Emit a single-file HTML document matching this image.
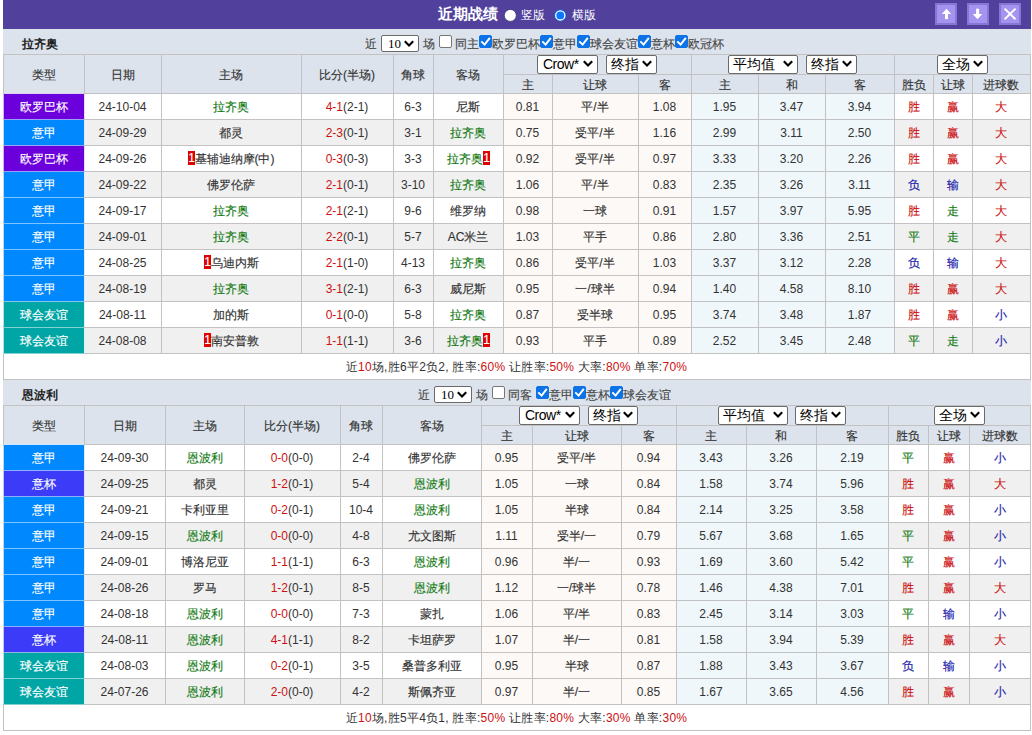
<!DOCTYPE html><html><head><meta charset="utf-8"><style>
html,body{margin:0;padding:0;background:#fff;}
body{width:1032px;height:735px;position:relative;overflow:hidden;font-family:'Liberation Sans', sans-serif;font-size:12px;color:#333333;}
body>div{position:absolute;box-sizing:border-box;white-space:nowrap;}
.rc{font-style:normal;background:#e00000;color:#fff;display:inline-block;width:7px;height:14px;line-height:14px;font-size:12px;text-align:center;overflow:hidden;vertical-align:-2px;letter-spacing:-1px}
.cj{position:relative;top:1px;-webkit-text-stroke:0.15px}
.lbl{font-weight:bold;font-size:12px;line-height:14px;color:#222}
.ft{line-height:14px;color:#444;-webkit-text-stroke:0.12px}
.ttl{font-size:15px;font-weight:bold;color:#fff;line-height:18px}
.rt{font-size:12px;color:#fff;line-height:14px}
.radio{width:13px;height:13px;border-radius:50%;background:#fff;box-sizing:border-box;border:1px solid #ccc}
.radio.on{border:2px solid #fff;background:#1a6ff0;box-shadow:inset 0 0 0 1.5px #fff}
.btn{width:22px;height:22px;background:#a493ef;border:2px solid #8776d6;box-sizing:border-box}
.sel{background:#fff;border:1px solid #6a6a6a;border-radius:2px;color:#000;}
.sel span{position:absolute;left:5px;top:0px;line-height:16px}
.sel2{background:#fff;border:1px solid #6a6a6a;border-radius:2px;color:#000;}
.sel2 span{position:absolute;left:6px;top:0;line-height:15px;font-family:'Liberation Serif',serif;font-size:13px;}
.chev{position:absolute;top:4px}
.cb{width:13px;height:13px;border:1px solid #767676;border-radius:2px;background:#fff;box-sizing:border-box}
.cb.on{background:#0b72e7;border-color:#0b72e7}
.cb svg{position:absolute;left:-1px;top:-1px}
</style></head><body>
<div style="left:3px;top:0;width:1028px;height:29px;background:#51419d"></div>
<div class="ttl" style="left:438px;top:5px">近期战绩</div>
<svg style="position:absolute;left:503px;top:8px" width="15" height="15" viewBox="0 0 15 15"><circle cx="7.3" cy="7.4" r="6" fill="#fff" stroke="#3a3070" stroke-width="0.8"/></svg>
<div class="rt" style="left:521px;top:8px">竖版</div>
<svg style="position:absolute;left:553px;top:8px" width="15" height="15" viewBox="0 0 15 15"><circle cx="7.3" cy="7.4" r="6.2" fill="#1f5fd8"/><circle cx="7.3" cy="7.4" r="4.6" fill="#0a78ff" stroke="#fff" stroke-width="1.3"/></svg>
<div class="rt" style="left:572px;top:8px">横版</div>
<div class="btn" style="left:935px;top:3px"><svg width="22" height="22" viewBox="0 0 22 22" style="position:absolute;left:-2px;top:-2px"><path d="M6.8 11 L11.5 5.8 L16.2 11 Z" fill="#fff"/><rect x="10" y="10.5" width="3" height="5.6" fill="#fff"/></svg></div>
<div class="btn" style="left:967px;top:3px"><svg width="22" height="22" viewBox="0 0 22 22" style="position:absolute;left:-2px;top:-2px"><path d="M5.7 11 L10.5 16.2 L15.3 11 Z" fill="#fff"/><rect x="9.1" y="5.7" width="3" height="5.8" fill="#fff"/></svg></div>
<div class="btn" style="left:999px;top:3px"><svg width="22" height="22" viewBox="0 0 22 22" style="position:absolute;left:-2px;top:-2px"><path d="M5.6 5.6 L16.5 16.3 M16.5 5.6 L5.6 16.3" stroke="#fff" stroke-width="2"/></svg></div>
<div style="left:3px;top:29px;width:1028px;height:25px;background:#dce3ec"></div>
<div class="lbl" style="left:22px;top:37px">拉齐奥</div>
<div class="ft" style="left:365px;top:37px">近</div><div class="sel2" style="left:381px;top:35px;width:38px;height:17px"><span>10</span><svg class="chev" style="right:4px;top:4px" width="10" height="7" viewBox="0 0 10 7"><path d="M0.8 1.2 L5 5.4 L9.2 1.2" fill="none" stroke="#000" stroke-width="2.1"/></svg></div><div class="ft" style="left:423px;top:37px">场</div><div class="cb" style="left:439px;top:35px"></div><div class="ft" style="left:455px;top:37px">同主</div><div class="cb on" style="left:479px;top:35px"><svg width="13" height="13" viewBox="0 0 13 13"><path d="M2.3 6.4 L5.6 9.6 L10.8 2.9" fill="none" stroke="#fff" stroke-width="2"/></svg></div><div class="ft" style="left:492px;top:37px">欧罗巴杯</div><div class="cb on" style="left:540px;top:35px"><svg width="13" height="13" viewBox="0 0 13 13"><path d="M2.3 6.4 L5.6 9.6 L10.8 2.9" fill="none" stroke="#fff" stroke-width="2"/></svg></div><div class="ft" style="left:553px;top:37px">意甲</div><div class="cb on" style="left:577px;top:35px"><svg width="13" height="13" viewBox="0 0 13 13"><path d="M2.3 6.4 L5.6 9.6 L10.8 2.9" fill="none" stroke="#fff" stroke-width="2"/></svg></div><div class="ft" style="left:590px;top:37px">球会友谊</div><div class="cb on" style="left:638px;top:35px"><svg width="13" height="13" viewBox="0 0 13 13"><path d="M2.3 6.4 L5.6 9.6 L10.8 2.9" fill="none" stroke="#fff" stroke-width="2"/></svg></div><div class="ft" style="left:651px;top:37px">意杯</div><div class="cb on" style="left:675px;top:35px"><svg width="13" height="13" viewBox="0 0 13 13"><path d="M2.3 6.4 L5.6 9.6 L10.8 2.9" fill="none" stroke="#fff" stroke-width="2"/></svg></div><div class="ft" style="left:688px;top:37px">欧冠杯</div>
<div style="left:3px;top:54px;width:1028px;height:39px;background:#dce3ec"></div>
<div style="left:4px;top:55px;width:80px;height:38px;display:flex;align-items:center;justify-content:center;padding-right:1px"><span class="cj">类型</span></div>
<div style="left:85px;top:55px;width:76px;height:38px;display:flex;align-items:center;justify-content:center;padding-right:1px"><span class="cj">日期</span></div>
<div style="left:162px;top:55px;width:139px;height:38px;display:flex;align-items:center;justify-content:center;padding-right:1px"><span class="cj">主场</span></div>
<div style="left:302px;top:55px;width:91px;height:38px;display:flex;align-items:center;justify-content:center;padding-right:1px"><span class="cj">比分(半场)</span></div>
<div style="left:394px;top:55px;width:39px;height:38px;display:flex;align-items:center;justify-content:center;padding-right:1px"><span class="cj">角球</span></div>
<div style="left:434px;top:55px;width:69px;height:38px;display:flex;align-items:center;justify-content:center;padding-right:1px"><span class="cj">客场</span></div>
<div style="left:504px;top:75px;width:48px;height:18px;display:flex;align-items:center;justify-content:center;padding-right:1px"><span class="cj">主</span></div>
<div style="left:553px;top:75px;width:85px;height:18px;display:flex;align-items:center;justify-content:center;padding-right:1px"><span class="cj">让球</span></div>
<div style="left:639px;top:75px;width:52px;height:18px;display:flex;align-items:center;justify-content:center;padding-right:1px"><span class="cj">客</span></div>
<div style="left:692px;top:75px;width:66px;height:18px;display:flex;align-items:center;justify-content:center;padding-right:1px"><span class="cj">主</span></div>
<div style="left:759px;top:75px;width:66px;height:18px;display:flex;align-items:center;justify-content:center;padding-right:1px"><span class="cj">和</span></div>
<div style="left:826px;top:75px;width:68px;height:18px;display:flex;align-items:center;justify-content:center;padding-right:1px"><span class="cj">客</span></div>
<div style="left:895px;top:75px;width:38px;height:18px;display:flex;align-items:center;justify-content:center;padding-right:1px"><span class="cj">胜负</span></div>
<div style="left:934px;top:75px;width:38px;height:18px;display:flex;align-items:center;justify-content:center;padding-right:1px"><span class="cj">让球</span></div>
<div style="left:973px;top:75px;width:57px;height:18px;display:flex;align-items:center;justify-content:center;padding-right:1px"><span class="cj">进球数</span></div>
<div style="left:4px;top:94px;width:80px;height:25px;background:#6b00dc;color:#fff;display:flex;align-items:center;justify-content:center;padding-right:1px"><span class="cj">欧罗巴杯</span></div>
<div style="left:85px;top:94px;width:76px;height:25px;background:#fff;display:flex;align-items:center;justify-content:center;padding-right:1px"><span>24-10-04</span></div>
<div style="left:162px;top:94px;width:139px;height:25px;background:#fff;display:flex;align-items:center;justify-content:center;padding-right:1px"><span class="cj"><span style="color:#127a12">拉齐奥</span></span></div>
<div style="left:302px;top:94px;width:91px;height:25px;background:#fff;display:flex;align-items:center;justify-content:center;padding-right:1px"><span><span style="color:#cc1111">4-1</span>(2-1)</span></div>
<div style="left:394px;top:94px;width:39px;height:25px;background:#fff;display:flex;align-items:center;justify-content:center;padding-right:1px"><span>6-3</span></div>
<div style="left:434px;top:94px;width:69px;height:25px;background:#fff;display:flex;align-items:center;justify-content:center;padding-right:1px"><span class="cj"><span>尼斯</span></span></div>
<div style="left:504px;top:94px;width:48px;height:25px;background:#fdf9f6;display:flex;align-items:center;justify-content:center;padding-right:1px"><span>0.81</span></div>
<div style="left:553px;top:94px;width:85px;height:25px;background:#fdf9f6;display:flex;align-items:center;justify-content:center;padding-right:1px"><span class="cj">平/半</span></div>
<div style="left:639px;top:94px;width:52px;height:25px;background:#fdf9f6;display:flex;align-items:center;justify-content:center;padding-right:1px"><span>1.08</span></div>
<div style="left:692px;top:94px;width:66px;height:25px;background:#eff7fa;display:flex;align-items:center;justify-content:center;padding-right:1px"><span>1.95</span></div>
<div style="left:759px;top:94px;width:66px;height:25px;background:#eff7fa;display:flex;align-items:center;justify-content:center;padding-right:1px"><span>3.47</span></div>
<div style="left:826px;top:94px;width:68px;height:25px;background:#eff7fa;display:flex;align-items:center;justify-content:center;padding-right:1px"><span>3.94</span></div>
<div style="left:895px;top:94px;width:38px;height:25px;background:#fff;display:flex;align-items:center;justify-content:center;padding-right:1px"><span class="cj"><span style="color:#cc1111">胜</span></span></div>
<div style="left:934px;top:94px;width:38px;height:25px;background:#fff;display:flex;align-items:center;justify-content:center;padding-right:1px"><span class="cj"><span style="color:#cc1111">赢</span></span></div>
<div style="left:973px;top:94px;width:57px;height:25px;background:#fff;display:flex;align-items:center;justify-content:center;padding-right:1px"><span class="cj"><span style="color:#cc1111">大</span></span></div>
<div style="left:4px;top:120px;width:80px;height:25px;background:#0088ff;color:#fff;display:flex;align-items:center;justify-content:center;padding-right:1px"><span class="cj">意甲</span></div>
<div style="left:85px;top:120px;width:76px;height:25px;background:#f0f0f0;display:flex;align-items:center;justify-content:center;padding-right:1px"><span>24-09-29</span></div>
<div style="left:162px;top:120px;width:139px;height:25px;background:#f0f0f0;display:flex;align-items:center;justify-content:center;padding-right:1px"><span class="cj"><span>都灵</span></span></div>
<div style="left:302px;top:120px;width:91px;height:25px;background:#f0f0f0;display:flex;align-items:center;justify-content:center;padding-right:1px"><span><span style="color:#cc1111">2-3</span>(0-1)</span></div>
<div style="left:394px;top:120px;width:39px;height:25px;background:#f0f0f0;display:flex;align-items:center;justify-content:center;padding-right:1px"><span>3-1</span></div>
<div style="left:434px;top:120px;width:69px;height:25px;background:#f0f0f0;display:flex;align-items:center;justify-content:center;padding-right:1px"><span class="cj"><span style="color:#127a12">拉齐奥</span></span></div>
<div style="left:504px;top:120px;width:48px;height:25px;background:#fdf9f6;display:flex;align-items:center;justify-content:center;padding-right:1px"><span>0.75</span></div>
<div style="left:553px;top:120px;width:85px;height:25px;background:#fdf9f6;display:flex;align-items:center;justify-content:center;padding-right:1px"><span class="cj">受平/半</span></div>
<div style="left:639px;top:120px;width:52px;height:25px;background:#fdf9f6;display:flex;align-items:center;justify-content:center;padding-right:1px"><span>1.16</span></div>
<div style="left:692px;top:120px;width:66px;height:25px;background:#eff7fa;display:flex;align-items:center;justify-content:center;padding-right:1px"><span>2.99</span></div>
<div style="left:759px;top:120px;width:66px;height:25px;background:#eff7fa;display:flex;align-items:center;justify-content:center;padding-right:1px"><span>3.11</span></div>
<div style="left:826px;top:120px;width:68px;height:25px;background:#eff7fa;display:flex;align-items:center;justify-content:center;padding-right:1px"><span>2.50</span></div>
<div style="left:895px;top:120px;width:38px;height:25px;background:#f0f0f0;display:flex;align-items:center;justify-content:center;padding-right:1px"><span class="cj"><span style="color:#cc1111">胜</span></span></div>
<div style="left:934px;top:120px;width:38px;height:25px;background:#f0f0f0;display:flex;align-items:center;justify-content:center;padding-right:1px"><span class="cj"><span style="color:#cc1111">赢</span></span></div>
<div style="left:973px;top:120px;width:57px;height:25px;background:#f0f0f0;display:flex;align-items:center;justify-content:center;padding-right:1px"><span class="cj"><span style="color:#cc1111">大</span></span></div>
<div style="left:4px;top:146px;width:80px;height:25px;background:#6b00dc;color:#fff;display:flex;align-items:center;justify-content:center;padding-right:1px"><span class="cj">欧罗巴杯</span></div>
<div style="left:85px;top:146px;width:76px;height:25px;background:#fff;display:flex;align-items:center;justify-content:center;padding-right:1px"><span>24-09-26</span></div>
<div style="left:162px;top:146px;width:139px;height:25px;background:#fff;display:flex;align-items:center;justify-content:center;padding-right:1px"><span class="cj"><span><i class="rc">1</i>基辅迪纳摩(中)</span></span></div>
<div style="left:302px;top:146px;width:91px;height:25px;background:#fff;display:flex;align-items:center;justify-content:center;padding-right:1px"><span><span style="color:#cc1111">0-3</span>(0-3)</span></div>
<div style="left:394px;top:146px;width:39px;height:25px;background:#fff;display:flex;align-items:center;justify-content:center;padding-right:1px"><span>3-3</span></div>
<div style="left:434px;top:146px;width:69px;height:25px;background:#fff;display:flex;align-items:center;justify-content:center;padding-right:1px"><span class="cj"><span style="color:#127a12">拉齐奥<i class="rc">1</i></span></span></div>
<div style="left:504px;top:146px;width:48px;height:25px;background:#fdf9f6;display:flex;align-items:center;justify-content:center;padding-right:1px"><span>0.92</span></div>
<div style="left:553px;top:146px;width:85px;height:25px;background:#fdf9f6;display:flex;align-items:center;justify-content:center;padding-right:1px"><span class="cj">受平/半</span></div>
<div style="left:639px;top:146px;width:52px;height:25px;background:#fdf9f6;display:flex;align-items:center;justify-content:center;padding-right:1px"><span>0.97</span></div>
<div style="left:692px;top:146px;width:66px;height:25px;background:#eff7fa;display:flex;align-items:center;justify-content:center;padding-right:1px"><span>3.33</span></div>
<div style="left:759px;top:146px;width:66px;height:25px;background:#eff7fa;display:flex;align-items:center;justify-content:center;padding-right:1px"><span>3.20</span></div>
<div style="left:826px;top:146px;width:68px;height:25px;background:#eff7fa;display:flex;align-items:center;justify-content:center;padding-right:1px"><span>2.26</span></div>
<div style="left:895px;top:146px;width:38px;height:25px;background:#fff;display:flex;align-items:center;justify-content:center;padding-right:1px"><span class="cj"><span style="color:#cc1111">胜</span></span></div>
<div style="left:934px;top:146px;width:38px;height:25px;background:#fff;display:flex;align-items:center;justify-content:center;padding-right:1px"><span class="cj"><span style="color:#cc1111">赢</span></span></div>
<div style="left:973px;top:146px;width:57px;height:25px;background:#fff;display:flex;align-items:center;justify-content:center;padding-right:1px"><span class="cj"><span style="color:#cc1111">大</span></span></div>
<div style="left:4px;top:172px;width:80px;height:25px;background:#0088ff;color:#fff;display:flex;align-items:center;justify-content:center;padding-right:1px"><span class="cj">意甲</span></div>
<div style="left:85px;top:172px;width:76px;height:25px;background:#f0f0f0;display:flex;align-items:center;justify-content:center;padding-right:1px"><span>24-09-22</span></div>
<div style="left:162px;top:172px;width:139px;height:25px;background:#f0f0f0;display:flex;align-items:center;justify-content:center;padding-right:1px"><span class="cj"><span>佛罗伦萨</span></span></div>
<div style="left:302px;top:172px;width:91px;height:25px;background:#f0f0f0;display:flex;align-items:center;justify-content:center;padding-right:1px"><span><span style="color:#cc1111">2-1</span>(0-1)</span></div>
<div style="left:394px;top:172px;width:39px;height:25px;background:#f0f0f0;display:flex;align-items:center;justify-content:center;padding-right:1px"><span>3-10</span></div>
<div style="left:434px;top:172px;width:69px;height:25px;background:#f0f0f0;display:flex;align-items:center;justify-content:center;padding-right:1px"><span class="cj"><span style="color:#127a12">拉齐奥</span></span></div>
<div style="left:504px;top:172px;width:48px;height:25px;background:#fdf9f6;display:flex;align-items:center;justify-content:center;padding-right:1px"><span>1.06</span></div>
<div style="left:553px;top:172px;width:85px;height:25px;background:#fdf9f6;display:flex;align-items:center;justify-content:center;padding-right:1px"><span class="cj">平/半</span></div>
<div style="left:639px;top:172px;width:52px;height:25px;background:#fdf9f6;display:flex;align-items:center;justify-content:center;padding-right:1px"><span>0.83</span></div>
<div style="left:692px;top:172px;width:66px;height:25px;background:#eff7fa;display:flex;align-items:center;justify-content:center;padding-right:1px"><span>2.35</span></div>
<div style="left:759px;top:172px;width:66px;height:25px;background:#eff7fa;display:flex;align-items:center;justify-content:center;padding-right:1px"><span>3.26</span></div>
<div style="left:826px;top:172px;width:68px;height:25px;background:#eff7fa;display:flex;align-items:center;justify-content:center;padding-right:1px"><span>3.11</span></div>
<div style="left:895px;top:172px;width:38px;height:25px;background:#f0f0f0;display:flex;align-items:center;justify-content:center;padding-right:1px"><span class="cj"><span style="color:#1a1aaa">负</span></span></div>
<div style="left:934px;top:172px;width:38px;height:25px;background:#f0f0f0;display:flex;align-items:center;justify-content:center;padding-right:1px"><span class="cj"><span style="color:#1a1aaa">输</span></span></div>
<div style="left:973px;top:172px;width:57px;height:25px;background:#f0f0f0;display:flex;align-items:center;justify-content:center;padding-right:1px"><span class="cj"><span style="color:#cc1111">大</span></span></div>
<div style="left:4px;top:198px;width:80px;height:25px;background:#0088ff;color:#fff;display:flex;align-items:center;justify-content:center;padding-right:1px"><span class="cj">意甲</span></div>
<div style="left:85px;top:198px;width:76px;height:25px;background:#fff;display:flex;align-items:center;justify-content:center;padding-right:1px"><span>24-09-17</span></div>
<div style="left:162px;top:198px;width:139px;height:25px;background:#fff;display:flex;align-items:center;justify-content:center;padding-right:1px"><span class="cj"><span style="color:#127a12">拉齐奥</span></span></div>
<div style="left:302px;top:198px;width:91px;height:25px;background:#fff;display:flex;align-items:center;justify-content:center;padding-right:1px"><span><span style="color:#cc1111">2-1</span>(2-1)</span></div>
<div style="left:394px;top:198px;width:39px;height:25px;background:#fff;display:flex;align-items:center;justify-content:center;padding-right:1px"><span>9-6</span></div>
<div style="left:434px;top:198px;width:69px;height:25px;background:#fff;display:flex;align-items:center;justify-content:center;padding-right:1px"><span class="cj"><span>维罗纳</span></span></div>
<div style="left:504px;top:198px;width:48px;height:25px;background:#fdf9f6;display:flex;align-items:center;justify-content:center;padding-right:1px"><span>0.98</span></div>
<div style="left:553px;top:198px;width:85px;height:25px;background:#fdf9f6;display:flex;align-items:center;justify-content:center;padding-right:1px"><span class="cj">一球</span></div>
<div style="left:639px;top:198px;width:52px;height:25px;background:#fdf9f6;display:flex;align-items:center;justify-content:center;padding-right:1px"><span>0.91</span></div>
<div style="left:692px;top:198px;width:66px;height:25px;background:#eff7fa;display:flex;align-items:center;justify-content:center;padding-right:1px"><span>1.57</span></div>
<div style="left:759px;top:198px;width:66px;height:25px;background:#eff7fa;display:flex;align-items:center;justify-content:center;padding-right:1px"><span>3.97</span></div>
<div style="left:826px;top:198px;width:68px;height:25px;background:#eff7fa;display:flex;align-items:center;justify-content:center;padding-right:1px"><span>5.95</span></div>
<div style="left:895px;top:198px;width:38px;height:25px;background:#fff;display:flex;align-items:center;justify-content:center;padding-right:1px"><span class="cj"><span style="color:#cc1111">胜</span></span></div>
<div style="left:934px;top:198px;width:38px;height:25px;background:#fff;display:flex;align-items:center;justify-content:center;padding-right:1px"><span class="cj"><span style="color:#127a12">走</span></span></div>
<div style="left:973px;top:198px;width:57px;height:25px;background:#fff;display:flex;align-items:center;justify-content:center;padding-right:1px"><span class="cj"><span style="color:#cc1111">大</span></span></div>
<div style="left:4px;top:224px;width:80px;height:25px;background:#0088ff;color:#fff;display:flex;align-items:center;justify-content:center;padding-right:1px"><span class="cj">意甲</span></div>
<div style="left:85px;top:224px;width:76px;height:25px;background:#f0f0f0;display:flex;align-items:center;justify-content:center;padding-right:1px"><span>24-09-01</span></div>
<div style="left:162px;top:224px;width:139px;height:25px;background:#f0f0f0;display:flex;align-items:center;justify-content:center;padding-right:1px"><span class="cj"><span style="color:#127a12">拉齐奥</span></span></div>
<div style="left:302px;top:224px;width:91px;height:25px;background:#f0f0f0;display:flex;align-items:center;justify-content:center;padding-right:1px"><span><span style="color:#cc1111">2-2</span>(0-1)</span></div>
<div style="left:394px;top:224px;width:39px;height:25px;background:#f0f0f0;display:flex;align-items:center;justify-content:center;padding-right:1px"><span>5-7</span></div>
<div style="left:434px;top:224px;width:69px;height:25px;background:#f0f0f0;display:flex;align-items:center;justify-content:center;padding-right:1px"><span class="cj"><span>AC米兰</span></span></div>
<div style="left:504px;top:224px;width:48px;height:25px;background:#fdf9f6;display:flex;align-items:center;justify-content:center;padding-right:1px"><span>1.03</span></div>
<div style="left:553px;top:224px;width:85px;height:25px;background:#fdf9f6;display:flex;align-items:center;justify-content:center;padding-right:1px"><span class="cj">平手</span></div>
<div style="left:639px;top:224px;width:52px;height:25px;background:#fdf9f6;display:flex;align-items:center;justify-content:center;padding-right:1px"><span>0.86</span></div>
<div style="left:692px;top:224px;width:66px;height:25px;background:#eff7fa;display:flex;align-items:center;justify-content:center;padding-right:1px"><span>2.80</span></div>
<div style="left:759px;top:224px;width:66px;height:25px;background:#eff7fa;display:flex;align-items:center;justify-content:center;padding-right:1px"><span>3.36</span></div>
<div style="left:826px;top:224px;width:68px;height:25px;background:#eff7fa;display:flex;align-items:center;justify-content:center;padding-right:1px"><span>2.51</span></div>
<div style="left:895px;top:224px;width:38px;height:25px;background:#f0f0f0;display:flex;align-items:center;justify-content:center;padding-right:1px"><span class="cj"><span style="color:#127a12">平</span></span></div>
<div style="left:934px;top:224px;width:38px;height:25px;background:#f0f0f0;display:flex;align-items:center;justify-content:center;padding-right:1px"><span class="cj"><span style="color:#127a12">走</span></span></div>
<div style="left:973px;top:224px;width:57px;height:25px;background:#f0f0f0;display:flex;align-items:center;justify-content:center;padding-right:1px"><span class="cj"><span style="color:#cc1111">大</span></span></div>
<div style="left:4px;top:250px;width:80px;height:25px;background:#0088ff;color:#fff;display:flex;align-items:center;justify-content:center;padding-right:1px"><span class="cj">意甲</span></div>
<div style="left:85px;top:250px;width:76px;height:25px;background:#fff;display:flex;align-items:center;justify-content:center;padding-right:1px"><span>24-08-25</span></div>
<div style="left:162px;top:250px;width:139px;height:25px;background:#fff;display:flex;align-items:center;justify-content:center;padding-right:1px"><span class="cj"><span><i class="rc">1</i>乌迪内斯</span></span></div>
<div style="left:302px;top:250px;width:91px;height:25px;background:#fff;display:flex;align-items:center;justify-content:center;padding-right:1px"><span><span style="color:#cc1111">2-1</span>(1-0)</span></div>
<div style="left:394px;top:250px;width:39px;height:25px;background:#fff;display:flex;align-items:center;justify-content:center;padding-right:1px"><span>4-13</span></div>
<div style="left:434px;top:250px;width:69px;height:25px;background:#fff;display:flex;align-items:center;justify-content:center;padding-right:1px"><span class="cj"><span style="color:#127a12">拉齐奥</span></span></div>
<div style="left:504px;top:250px;width:48px;height:25px;background:#fdf9f6;display:flex;align-items:center;justify-content:center;padding-right:1px"><span>0.86</span></div>
<div style="left:553px;top:250px;width:85px;height:25px;background:#fdf9f6;display:flex;align-items:center;justify-content:center;padding-right:1px"><span class="cj">受平/半</span></div>
<div style="left:639px;top:250px;width:52px;height:25px;background:#fdf9f6;display:flex;align-items:center;justify-content:center;padding-right:1px"><span>1.03</span></div>
<div style="left:692px;top:250px;width:66px;height:25px;background:#eff7fa;display:flex;align-items:center;justify-content:center;padding-right:1px"><span>3.37</span></div>
<div style="left:759px;top:250px;width:66px;height:25px;background:#eff7fa;display:flex;align-items:center;justify-content:center;padding-right:1px"><span>3.12</span></div>
<div style="left:826px;top:250px;width:68px;height:25px;background:#eff7fa;display:flex;align-items:center;justify-content:center;padding-right:1px"><span>2.28</span></div>
<div style="left:895px;top:250px;width:38px;height:25px;background:#fff;display:flex;align-items:center;justify-content:center;padding-right:1px"><span class="cj"><span style="color:#1a1aaa">负</span></span></div>
<div style="left:934px;top:250px;width:38px;height:25px;background:#fff;display:flex;align-items:center;justify-content:center;padding-right:1px"><span class="cj"><span style="color:#1a1aaa">输</span></span></div>
<div style="left:973px;top:250px;width:57px;height:25px;background:#fff;display:flex;align-items:center;justify-content:center;padding-right:1px"><span class="cj"><span style="color:#cc1111">大</span></span></div>
<div style="left:4px;top:276px;width:80px;height:25px;background:#0088ff;color:#fff;display:flex;align-items:center;justify-content:center;padding-right:1px"><span class="cj">意甲</span></div>
<div style="left:85px;top:276px;width:76px;height:25px;background:#f0f0f0;display:flex;align-items:center;justify-content:center;padding-right:1px"><span>24-08-19</span></div>
<div style="left:162px;top:276px;width:139px;height:25px;background:#f0f0f0;display:flex;align-items:center;justify-content:center;padding-right:1px"><span class="cj"><span style="color:#127a12">拉齐奥</span></span></div>
<div style="left:302px;top:276px;width:91px;height:25px;background:#f0f0f0;display:flex;align-items:center;justify-content:center;padding-right:1px"><span><span style="color:#cc1111">3-1</span>(2-1)</span></div>
<div style="left:394px;top:276px;width:39px;height:25px;background:#f0f0f0;display:flex;align-items:center;justify-content:center;padding-right:1px"><span>6-3</span></div>
<div style="left:434px;top:276px;width:69px;height:25px;background:#f0f0f0;display:flex;align-items:center;justify-content:center;padding-right:1px"><span class="cj"><span>威尼斯</span></span></div>
<div style="left:504px;top:276px;width:48px;height:25px;background:#fdf9f6;display:flex;align-items:center;justify-content:center;padding-right:1px"><span>0.95</span></div>
<div style="left:553px;top:276px;width:85px;height:25px;background:#fdf9f6;display:flex;align-items:center;justify-content:center;padding-right:1px"><span class="cj">一/球半</span></div>
<div style="left:639px;top:276px;width:52px;height:25px;background:#fdf9f6;display:flex;align-items:center;justify-content:center;padding-right:1px"><span>0.94</span></div>
<div style="left:692px;top:276px;width:66px;height:25px;background:#eff7fa;display:flex;align-items:center;justify-content:center;padding-right:1px"><span>1.40</span></div>
<div style="left:759px;top:276px;width:66px;height:25px;background:#eff7fa;display:flex;align-items:center;justify-content:center;padding-right:1px"><span>4.58</span></div>
<div style="left:826px;top:276px;width:68px;height:25px;background:#eff7fa;display:flex;align-items:center;justify-content:center;padding-right:1px"><span>8.10</span></div>
<div style="left:895px;top:276px;width:38px;height:25px;background:#f0f0f0;display:flex;align-items:center;justify-content:center;padding-right:1px"><span class="cj"><span style="color:#cc1111">胜</span></span></div>
<div style="left:934px;top:276px;width:38px;height:25px;background:#f0f0f0;display:flex;align-items:center;justify-content:center;padding-right:1px"><span class="cj"><span style="color:#cc1111">赢</span></span></div>
<div style="left:973px;top:276px;width:57px;height:25px;background:#f0f0f0;display:flex;align-items:center;justify-content:center;padding-right:1px"><span class="cj"><span style="color:#cc1111">大</span></span></div>
<div style="left:4px;top:302px;width:80px;height:25px;background:#00a5a5;color:#fff;display:flex;align-items:center;justify-content:center;padding-right:1px"><span class="cj">球会友谊</span></div>
<div style="left:85px;top:302px;width:76px;height:25px;background:#fff;display:flex;align-items:center;justify-content:center;padding-right:1px"><span>24-08-11</span></div>
<div style="left:162px;top:302px;width:139px;height:25px;background:#fff;display:flex;align-items:center;justify-content:center;padding-right:1px"><span class="cj"><span>加的斯</span></span></div>
<div style="left:302px;top:302px;width:91px;height:25px;background:#fff;display:flex;align-items:center;justify-content:center;padding-right:1px"><span><span style="color:#cc1111">0-1</span>(0-0)</span></div>
<div style="left:394px;top:302px;width:39px;height:25px;background:#fff;display:flex;align-items:center;justify-content:center;padding-right:1px"><span>5-8</span></div>
<div style="left:434px;top:302px;width:69px;height:25px;background:#fff;display:flex;align-items:center;justify-content:center;padding-right:1px"><span class="cj"><span style="color:#127a12">拉齐奥</span></span></div>
<div style="left:504px;top:302px;width:48px;height:25px;background:#fdf9f6;display:flex;align-items:center;justify-content:center;padding-right:1px"><span>0.87</span></div>
<div style="left:553px;top:302px;width:85px;height:25px;background:#fdf9f6;display:flex;align-items:center;justify-content:center;padding-right:1px"><span class="cj">受半球</span></div>
<div style="left:639px;top:302px;width:52px;height:25px;background:#fdf9f6;display:flex;align-items:center;justify-content:center;padding-right:1px"><span>0.95</span></div>
<div style="left:692px;top:302px;width:66px;height:25px;background:#eff7fa;display:flex;align-items:center;justify-content:center;padding-right:1px"><span>3.74</span></div>
<div style="left:759px;top:302px;width:66px;height:25px;background:#eff7fa;display:flex;align-items:center;justify-content:center;padding-right:1px"><span>3.48</span></div>
<div style="left:826px;top:302px;width:68px;height:25px;background:#eff7fa;display:flex;align-items:center;justify-content:center;padding-right:1px"><span>1.87</span></div>
<div style="left:895px;top:302px;width:38px;height:25px;background:#fff;display:flex;align-items:center;justify-content:center;padding-right:1px"><span class="cj"><span style="color:#cc1111">胜</span></span></div>
<div style="left:934px;top:302px;width:38px;height:25px;background:#fff;display:flex;align-items:center;justify-content:center;padding-right:1px"><span class="cj"><span style="color:#cc1111">赢</span></span></div>
<div style="left:973px;top:302px;width:57px;height:25px;background:#fff;display:flex;align-items:center;justify-content:center;padding-right:1px"><span class="cj"><span style="color:#1a1aaa">小</span></span></div>
<div style="left:4px;top:328px;width:80px;height:25px;background:#00a5a5;color:#fff;display:flex;align-items:center;justify-content:center;padding-right:1px"><span class="cj">球会友谊</span></div>
<div style="left:85px;top:328px;width:76px;height:25px;background:#f0f0f0;display:flex;align-items:center;justify-content:center;padding-right:1px"><span>24-08-08</span></div>
<div style="left:162px;top:328px;width:139px;height:25px;background:#f0f0f0;display:flex;align-items:center;justify-content:center;padding-right:1px"><span class="cj"><span><i class="rc">1</i>南安普敦</span></span></div>
<div style="left:302px;top:328px;width:91px;height:25px;background:#f0f0f0;display:flex;align-items:center;justify-content:center;padding-right:1px"><span><span style="color:#cc1111">1-1</span>(1-1)</span></div>
<div style="left:394px;top:328px;width:39px;height:25px;background:#f0f0f0;display:flex;align-items:center;justify-content:center;padding-right:1px"><span>3-6</span></div>
<div style="left:434px;top:328px;width:69px;height:25px;background:#f0f0f0;display:flex;align-items:center;justify-content:center;padding-right:1px"><span class="cj"><span style="color:#127a12">拉齐奥<i class="rc">1</i></span></span></div>
<div style="left:504px;top:328px;width:48px;height:25px;background:#fdf9f6;display:flex;align-items:center;justify-content:center;padding-right:1px"><span>0.93</span></div>
<div style="left:553px;top:328px;width:85px;height:25px;background:#fdf9f6;display:flex;align-items:center;justify-content:center;padding-right:1px"><span class="cj">平手</span></div>
<div style="left:639px;top:328px;width:52px;height:25px;background:#fdf9f6;display:flex;align-items:center;justify-content:center;padding-right:1px"><span>0.89</span></div>
<div style="left:692px;top:328px;width:66px;height:25px;background:#eff7fa;display:flex;align-items:center;justify-content:center;padding-right:1px"><span>2.52</span></div>
<div style="left:759px;top:328px;width:66px;height:25px;background:#eff7fa;display:flex;align-items:center;justify-content:center;padding-right:1px"><span>3.45</span></div>
<div style="left:826px;top:328px;width:68px;height:25px;background:#eff7fa;display:flex;align-items:center;justify-content:center;padding-right:1px"><span>2.48</span></div>
<div style="left:895px;top:328px;width:38px;height:25px;background:#f0f0f0;display:flex;align-items:center;justify-content:center;padding-right:1px"><span class="cj"><span style="color:#127a12">平</span></span></div>
<div style="left:934px;top:328px;width:38px;height:25px;background:#f0f0f0;display:flex;align-items:center;justify-content:center;padding-right:1px"><span class="cj"><span style="color:#127a12">走</span></span></div>
<div style="left:973px;top:328px;width:57px;height:25px;background:#f0f0f0;display:flex;align-items:center;justify-content:center;padding-right:1px"><span class="cj"><span style="color:#1a1aaa">小</span></span></div>
<div style="left:4px;top:354px;width:1026px;height:25px;background:#fff;display:flex;align-items:center;justify-content:center;padding-right:1px"><span style="letter-spacing:0.26px;position:relative;top:1px">近<span style="color:#cc1111">10</span>场,胜6平2负2, 胜率:<span style="color:#cc1111">60%</span> 让胜率:<span style="color:#cc1111">50%</span> 大率:<span style="color:#cc1111">80%</span> 单率:<span style="color:#cc1111">70%</span></span></div>
<div style="left:3px;top:54px;width:1028px;height:1px;background:#c2c2c2"></div>
<div style="left:503px;top:74px;width:528px;height:1px;background:#c2c2c2"></div>
<div style="left:3px;top:93px;width:1028px;height:1px;background:#c2c2c2"></div>
<div style="left:3px;top:119px;width:1028px;height:1px;background:#c2c2c2"></div>
<div style="left:3px;top:145px;width:1028px;height:1px;background:#c2c2c2"></div>
<div style="left:3px;top:171px;width:1028px;height:1px;background:#c2c2c2"></div>
<div style="left:3px;top:197px;width:1028px;height:1px;background:#c2c2c2"></div>
<div style="left:3px;top:223px;width:1028px;height:1px;background:#c2c2c2"></div>
<div style="left:3px;top:249px;width:1028px;height:1px;background:#c2c2c2"></div>
<div style="left:3px;top:275px;width:1028px;height:1px;background:#c2c2c2"></div>
<div style="left:3px;top:301px;width:1028px;height:1px;background:#c2c2c2"></div>
<div style="left:3px;top:327px;width:1028px;height:1px;background:#c2c2c2"></div>
<div style="left:3px;top:353px;width:1028px;height:1px;background:#c2c2c2"></div>
<div style="left:3px;top:379px;width:1028px;height:1px;background:#c2c2c2"></div>
<div style="left:3px;top:54px;width:1px;height:326px;background:#c2c2c2"></div>
<div style="left:84px;top:54px;width:1px;height:300px;background:#c2c2c2"></div>
<div style="left:161px;top:54px;width:1px;height:300px;background:#c2c2c2"></div>
<div style="left:301px;top:54px;width:1px;height:300px;background:#c2c2c2"></div>
<div style="left:393px;top:54px;width:1px;height:300px;background:#c2c2c2"></div>
<div style="left:433px;top:54px;width:1px;height:300px;background:#c2c2c2"></div>
<div style="left:503px;top:54px;width:1px;height:300px;background:#c2c2c2"></div>
<div style="left:552px;top:74px;width:1px;height:280px;background:#c2c2c2"></div>
<div style="left:638px;top:74px;width:1px;height:280px;background:#c2c2c2"></div>
<div style="left:691px;top:54px;width:1px;height:300px;background:#c2c2c2"></div>
<div style="left:758px;top:74px;width:1px;height:280px;background:#c2c2c2"></div>
<div style="left:825px;top:74px;width:1px;height:280px;background:#c2c2c2"></div>
<div style="left:894px;top:54px;width:1px;height:300px;background:#c2c2c2"></div>
<div style="left:933px;top:74px;width:1px;height:280px;background:#c2c2c2"></div>
<div style="left:972px;top:74px;width:1px;height:280px;background:#c2c2c2"></div>
<div style="left:1030px;top:54px;width:1px;height:326px;background:#c2c2c2"></div>
<div style="left:4px;top:93px;width:80px;height:1px;background:#e1ccf8"></div>
<div style="left:3px;top:94px;width:1px;height:25px;background:#d3b2f4"></div>
<div style="left:84px;top:94px;width:1px;height:25px;background:#e9d9fa"></div>
<div style="left:4px;top:119px;width:80px;height:1px;background:#9aa2f6"></div>
<div style="left:3px;top:120px;width:1px;height:25px;background:#b2dbff"></div>
<div style="left:84px;top:120px;width:1px;height:25px;background:#d9edff"></div>
<div style="left:4px;top:145px;width:80px;height:1px;background:#9aa2f6"></div>
<div style="left:3px;top:146px;width:1px;height:25px;background:#d3b2f4"></div>
<div style="left:84px;top:146px;width:1px;height:25px;background:#e9d9fa"></div>
<div style="left:4px;top:171px;width:80px;height:1px;background:#9aa2f6"></div>
<div style="left:3px;top:172px;width:1px;height:25px;background:#b2dbff"></div>
<div style="left:84px;top:172px;width:1px;height:25px;background:#d9edff"></div>
<div style="left:4px;top:197px;width:80px;height:1px;background:#80c4ff"></div>
<div style="left:3px;top:198px;width:1px;height:25px;background:#b2dbff"></div>
<div style="left:84px;top:198px;width:1px;height:25px;background:#d9edff"></div>
<div style="left:4px;top:223px;width:80px;height:1px;background:#80c4ff"></div>
<div style="left:3px;top:224px;width:1px;height:25px;background:#b2dbff"></div>
<div style="left:84px;top:224px;width:1px;height:25px;background:#d9edff"></div>
<div style="left:4px;top:249px;width:80px;height:1px;background:#80c4ff"></div>
<div style="left:3px;top:250px;width:1px;height:25px;background:#b2dbff"></div>
<div style="left:84px;top:250px;width:1px;height:25px;background:#d9edff"></div>
<div style="left:4px;top:275px;width:80px;height:1px;background:#80c4ff"></div>
<div style="left:3px;top:276px;width:1px;height:25px;background:#b2dbff"></div>
<div style="left:84px;top:276px;width:1px;height:25px;background:#d9edff"></div>
<div style="left:4px;top:301px;width:80px;height:1px;background:#80cae8"></div>
<div style="left:3px;top:302px;width:1px;height:25px;background:#b2e4e4"></div>
<div style="left:84px;top:302px;width:1px;height:25px;background:#d9f2f2"></div>
<div style="left:4px;top:327px;width:80px;height:1px;background:#80d2d2"></div>
<div style="left:3px;top:328px;width:1px;height:25px;background:#b2e4e4"></div>
<div style="left:84px;top:328px;width:1px;height:25px;background:#d9f2f2"></div>
<div style="left:4px;top:353px;width:80px;height:1px;background:#80d2d2"></div>
<div class="sel" style="left:537px;top:55px;width:61px;height:19px;"><span style="font-family:'Liberation Sans', sans-serif;font-size:14px;letter-spacing:-0.5px;">Crow*</span><svg class="chev" style="right:4px" width="10" height="7" viewBox="0 0 10 7"><path d="M0.8 1.2 L5 5.4 L9.2 1.2" fill="none" stroke="#000" stroke-width="2.1"/></svg></div>
<div class="sel" style="left:606px;top:55px;width:51px;height:19px;"><span style="font-family:'Liberation Sans', sans-serif;font-size:14px;top:-0.5px;left:4px;">终指</span><svg class="chev" style="right:4px" width="10" height="7" viewBox="0 0 10 7"><path d="M0.8 1.2 L5 5.4 L9.2 1.2" fill="none" stroke="#000" stroke-width="2.1"/></svg></div>
<div class="sel" style="left:728px;top:55px;width:70px;height:19px;"><span style="font-family:'Liberation Sans', sans-serif;font-size:14px;top:-0.5px;left:4px;">平均值</span><svg class="chev" style="right:4px" width="10" height="7" viewBox="0 0 10 7"><path d="M0.8 1.2 L5 5.4 L9.2 1.2" fill="none" stroke="#000" stroke-width="2.1"/></svg></div>
<div class="sel" style="left:806px;top:55px;width:51px;height:19px;"><span style="font-family:'Liberation Sans', sans-serif;font-size:14px;top:-0.5px;left:4px;">终指</span><svg class="chev" style="right:4px" width="10" height="7" viewBox="0 0 10 7"><path d="M0.8 1.2 L5 5.4 L9.2 1.2" fill="none" stroke="#000" stroke-width="2.1"/></svg></div>
<div class="sel" style="left:937px;top:55px;width:51px;height:19px;"><span style="font-family:'Liberation Sans', sans-serif;font-size:14px;top:-0.5px;left:4px;">全场</span><svg class="chev" style="right:4px" width="10" height="7" viewBox="0 0 10 7"><path d="M0.8 1.2 L5 5.4 L9.2 1.2" fill="none" stroke="#000" stroke-width="2.1"/></svg></div>
<div style="left:3px;top:380px;width:1028px;height:25px;background:#dce3ec"></div>
<div class="lbl" style="left:22px;top:388px">恩波利</div>
<div class="ft" style="left:418px;top:388px">近</div><div class="sel2" style="left:434px;top:386px;width:38px;height:17px"><span>10</span><svg class="chev" style="right:4px;top:4px" width="10" height="7" viewBox="0 0 10 7"><path d="M0.8 1.2 L5 5.4 L9.2 1.2" fill="none" stroke="#000" stroke-width="2.1"/></svg></div><div class="ft" style="left:476px;top:388px">场</div><div class="cb" style="left:492px;top:386px"></div><div class="ft" style="left:508px;top:388px">同客</div><div class="cb on" style="left:536px;top:386px"><svg width="13" height="13" viewBox="0 0 13 13"><path d="M2.3 6.4 L5.6 9.6 L10.8 2.9" fill="none" stroke="#fff" stroke-width="2"/></svg></div><div class="ft" style="left:549px;top:388px">意甲</div><div class="cb on" style="left:573px;top:386px"><svg width="13" height="13" viewBox="0 0 13 13"><path d="M2.3 6.4 L5.6 9.6 L10.8 2.9" fill="none" stroke="#fff" stroke-width="2"/></svg></div><div class="ft" style="left:586px;top:388px">意杯</div><div class="cb on" style="left:610px;top:386px"><svg width="13" height="13" viewBox="0 0 13 13"><path d="M2.3 6.4 L5.6 9.6 L10.8 2.9" fill="none" stroke="#fff" stroke-width="2"/></svg></div><div class="ft" style="left:623px;top:388px">球会友谊</div>
<div style="left:3px;top:405px;width:1028px;height:39px;background:#dce3ec"></div>
<div style="left:4px;top:406px;width:80px;height:38px;display:flex;align-items:center;justify-content:center;padding-right:1px"><span class="cj">类型</span></div>
<div style="left:85px;top:406px;width:80px;height:38px;display:flex;align-items:center;justify-content:center;padding-right:1px"><span class="cj">日期</span></div>
<div style="left:166px;top:406px;width:78px;height:38px;display:flex;align-items:center;justify-content:center;padding-right:1px"><span class="cj">主场</span></div>
<div style="left:245px;top:406px;width:95px;height:38px;display:flex;align-items:center;justify-content:center;padding-right:1px"><span class="cj">比分(半场)</span></div>
<div style="left:341px;top:406px;width:41px;height:38px;display:flex;align-items:center;justify-content:center;padding-right:1px"><span class="cj">角球</span></div>
<div style="left:383px;top:406px;width:98px;height:38px;display:flex;align-items:center;justify-content:center;padding-right:1px"><span class="cj">客场</span></div>
<div style="left:482px;top:426px;width:50px;height:18px;display:flex;align-items:center;justify-content:center;padding-right:1px"><span class="cj">主</span></div>
<div style="left:533px;top:426px;width:88px;height:18px;display:flex;align-items:center;justify-content:center;padding-right:1px"><span class="cj">让球</span></div>
<div style="left:622px;top:426px;width:54px;height:18px;display:flex;align-items:center;justify-content:center;padding-right:1px"><span class="cj">客</span></div>
<div style="left:677px;top:426px;width:69px;height:18px;display:flex;align-items:center;justify-content:center;padding-right:1px"><span class="cj">主</span></div>
<div style="left:747px;top:426px;width:69px;height:18px;display:flex;align-items:center;justify-content:center;padding-right:1px"><span class="cj">和</span></div>
<div style="left:817px;top:426px;width:71px;height:18px;display:flex;align-items:center;justify-content:center;padding-right:1px"><span class="cj">客</span></div>
<div style="left:889px;top:426px;width:39px;height:18px;display:flex;align-items:center;justify-content:center;padding-right:1px"><span class="cj">胜负</span></div>
<div style="left:929px;top:426px;width:40px;height:18px;display:flex;align-items:center;justify-content:center;padding-right:1px"><span class="cj">让球</span></div>
<div style="left:970px;top:426px;width:60px;height:18px;display:flex;align-items:center;justify-content:center;padding-right:1px"><span class="cj">进球数</span></div>
<div style="left:4px;top:445px;width:80px;height:25px;background:#0088ff;color:#fff;display:flex;align-items:center;justify-content:center;padding-right:1px"><span class="cj">意甲</span></div>
<div style="left:85px;top:445px;width:80px;height:25px;background:#fff;display:flex;align-items:center;justify-content:center;padding-right:1px"><span>24-09-30</span></div>
<div style="left:166px;top:445px;width:78px;height:25px;background:#fff;display:flex;align-items:center;justify-content:center;padding-right:1px"><span class="cj"><span style="color:#127a12">恩波利</span></span></div>
<div style="left:245px;top:445px;width:95px;height:25px;background:#fff;display:flex;align-items:center;justify-content:center;padding-right:1px"><span><span style="color:#cc1111">0-0</span>(0-0)</span></div>
<div style="left:341px;top:445px;width:41px;height:25px;background:#fff;display:flex;align-items:center;justify-content:center;padding-right:1px"><span>2-4</span></div>
<div style="left:383px;top:445px;width:98px;height:25px;background:#fff;display:flex;align-items:center;justify-content:center;padding-right:1px"><span class="cj"><span>佛罗伦萨</span></span></div>
<div style="left:482px;top:445px;width:50px;height:25px;background:#fdf9f6;display:flex;align-items:center;justify-content:center;padding-right:1px"><span>0.95</span></div>
<div style="left:533px;top:445px;width:88px;height:25px;background:#fdf9f6;display:flex;align-items:center;justify-content:center;padding-right:1px"><span class="cj">受平/半</span></div>
<div style="left:622px;top:445px;width:54px;height:25px;background:#fdf9f6;display:flex;align-items:center;justify-content:center;padding-right:1px"><span>0.94</span></div>
<div style="left:677px;top:445px;width:69px;height:25px;background:#eff7fa;display:flex;align-items:center;justify-content:center;padding-right:1px"><span>3.43</span></div>
<div style="left:747px;top:445px;width:69px;height:25px;background:#eff7fa;display:flex;align-items:center;justify-content:center;padding-right:1px"><span>3.26</span></div>
<div style="left:817px;top:445px;width:71px;height:25px;background:#eff7fa;display:flex;align-items:center;justify-content:center;padding-right:1px"><span>2.19</span></div>
<div style="left:889px;top:445px;width:39px;height:25px;background:#fff;display:flex;align-items:center;justify-content:center;padding-right:1px"><span class="cj"><span style="color:#127a12">平</span></span></div>
<div style="left:929px;top:445px;width:40px;height:25px;background:#fff;display:flex;align-items:center;justify-content:center;padding-right:1px"><span class="cj"><span style="color:#cc1111">赢</span></span></div>
<div style="left:970px;top:445px;width:60px;height:25px;background:#fff;display:flex;align-items:center;justify-content:center;padding-right:1px"><span class="cj"><span style="color:#1a1aaa">小</span></span></div>
<div style="left:4px;top:471px;width:80px;height:25px;background:#3b3bf8;color:#fff;display:flex;align-items:center;justify-content:center;padding-right:1px"><span class="cj">意杯</span></div>
<div style="left:85px;top:471px;width:80px;height:25px;background:#f0f0f0;display:flex;align-items:center;justify-content:center;padding-right:1px"><span>24-09-25</span></div>
<div style="left:166px;top:471px;width:78px;height:25px;background:#f0f0f0;display:flex;align-items:center;justify-content:center;padding-right:1px"><span class="cj"><span>都灵</span></span></div>
<div style="left:245px;top:471px;width:95px;height:25px;background:#f0f0f0;display:flex;align-items:center;justify-content:center;padding-right:1px"><span><span style="color:#cc1111">1-2</span>(0-1)</span></div>
<div style="left:341px;top:471px;width:41px;height:25px;background:#f0f0f0;display:flex;align-items:center;justify-content:center;padding-right:1px"><span>5-4</span></div>
<div style="left:383px;top:471px;width:98px;height:25px;background:#f0f0f0;display:flex;align-items:center;justify-content:center;padding-right:1px"><span class="cj"><span style="color:#127a12">恩波利</span></span></div>
<div style="left:482px;top:471px;width:50px;height:25px;background:#fdf9f6;display:flex;align-items:center;justify-content:center;padding-right:1px"><span>1.05</span></div>
<div style="left:533px;top:471px;width:88px;height:25px;background:#fdf9f6;display:flex;align-items:center;justify-content:center;padding-right:1px"><span class="cj">一球</span></div>
<div style="left:622px;top:471px;width:54px;height:25px;background:#fdf9f6;display:flex;align-items:center;justify-content:center;padding-right:1px"><span>0.84</span></div>
<div style="left:677px;top:471px;width:69px;height:25px;background:#eff7fa;display:flex;align-items:center;justify-content:center;padding-right:1px"><span>1.58</span></div>
<div style="left:747px;top:471px;width:69px;height:25px;background:#eff7fa;display:flex;align-items:center;justify-content:center;padding-right:1px"><span>3.74</span></div>
<div style="left:817px;top:471px;width:71px;height:25px;background:#eff7fa;display:flex;align-items:center;justify-content:center;padding-right:1px"><span>5.96</span></div>
<div style="left:889px;top:471px;width:39px;height:25px;background:#f0f0f0;display:flex;align-items:center;justify-content:center;padding-right:1px"><span class="cj"><span style="color:#cc1111">胜</span></span></div>
<div style="left:929px;top:471px;width:40px;height:25px;background:#f0f0f0;display:flex;align-items:center;justify-content:center;padding-right:1px"><span class="cj"><span style="color:#cc1111">赢</span></span></div>
<div style="left:970px;top:471px;width:60px;height:25px;background:#f0f0f0;display:flex;align-items:center;justify-content:center;padding-right:1px"><span class="cj"><span style="color:#cc1111">大</span></span></div>
<div style="left:4px;top:497px;width:80px;height:25px;background:#0088ff;color:#fff;display:flex;align-items:center;justify-content:center;padding-right:1px"><span class="cj">意甲</span></div>
<div style="left:85px;top:497px;width:80px;height:25px;background:#fff;display:flex;align-items:center;justify-content:center;padding-right:1px"><span>24-09-21</span></div>
<div style="left:166px;top:497px;width:78px;height:25px;background:#fff;display:flex;align-items:center;justify-content:center;padding-right:1px"><span class="cj"><span>卡利亚里</span></span></div>
<div style="left:245px;top:497px;width:95px;height:25px;background:#fff;display:flex;align-items:center;justify-content:center;padding-right:1px"><span><span style="color:#cc1111">0-2</span>(0-1)</span></div>
<div style="left:341px;top:497px;width:41px;height:25px;background:#fff;display:flex;align-items:center;justify-content:center;padding-right:1px"><span>10-4</span></div>
<div style="left:383px;top:497px;width:98px;height:25px;background:#fff;display:flex;align-items:center;justify-content:center;padding-right:1px"><span class="cj"><span style="color:#127a12">恩波利</span></span></div>
<div style="left:482px;top:497px;width:50px;height:25px;background:#fdf9f6;display:flex;align-items:center;justify-content:center;padding-right:1px"><span>1.05</span></div>
<div style="left:533px;top:497px;width:88px;height:25px;background:#fdf9f6;display:flex;align-items:center;justify-content:center;padding-right:1px"><span class="cj">半球</span></div>
<div style="left:622px;top:497px;width:54px;height:25px;background:#fdf9f6;display:flex;align-items:center;justify-content:center;padding-right:1px"><span>0.84</span></div>
<div style="left:677px;top:497px;width:69px;height:25px;background:#eff7fa;display:flex;align-items:center;justify-content:center;padding-right:1px"><span>2.14</span></div>
<div style="left:747px;top:497px;width:69px;height:25px;background:#eff7fa;display:flex;align-items:center;justify-content:center;padding-right:1px"><span>3.25</span></div>
<div style="left:817px;top:497px;width:71px;height:25px;background:#eff7fa;display:flex;align-items:center;justify-content:center;padding-right:1px"><span>3.58</span></div>
<div style="left:889px;top:497px;width:39px;height:25px;background:#fff;display:flex;align-items:center;justify-content:center;padding-right:1px"><span class="cj"><span style="color:#cc1111">胜</span></span></div>
<div style="left:929px;top:497px;width:40px;height:25px;background:#fff;display:flex;align-items:center;justify-content:center;padding-right:1px"><span class="cj"><span style="color:#cc1111">赢</span></span></div>
<div style="left:970px;top:497px;width:60px;height:25px;background:#fff;display:flex;align-items:center;justify-content:center;padding-right:1px"><span class="cj"><span style="color:#1a1aaa">小</span></span></div>
<div style="left:4px;top:523px;width:80px;height:25px;background:#0088ff;color:#fff;display:flex;align-items:center;justify-content:center;padding-right:1px"><span class="cj">意甲</span></div>
<div style="left:85px;top:523px;width:80px;height:25px;background:#f0f0f0;display:flex;align-items:center;justify-content:center;padding-right:1px"><span>24-09-15</span></div>
<div style="left:166px;top:523px;width:78px;height:25px;background:#f0f0f0;display:flex;align-items:center;justify-content:center;padding-right:1px"><span class="cj"><span style="color:#127a12">恩波利</span></span></div>
<div style="left:245px;top:523px;width:95px;height:25px;background:#f0f0f0;display:flex;align-items:center;justify-content:center;padding-right:1px"><span><span style="color:#cc1111">0-0</span>(0-0)</span></div>
<div style="left:341px;top:523px;width:41px;height:25px;background:#f0f0f0;display:flex;align-items:center;justify-content:center;padding-right:1px"><span>4-8</span></div>
<div style="left:383px;top:523px;width:98px;height:25px;background:#f0f0f0;display:flex;align-items:center;justify-content:center;padding-right:1px"><span class="cj"><span>尤文图斯</span></span></div>
<div style="left:482px;top:523px;width:50px;height:25px;background:#fdf9f6;display:flex;align-items:center;justify-content:center;padding-right:1px"><span>1.11</span></div>
<div style="left:533px;top:523px;width:88px;height:25px;background:#fdf9f6;display:flex;align-items:center;justify-content:center;padding-right:1px"><span class="cj">受半/一</span></div>
<div style="left:622px;top:523px;width:54px;height:25px;background:#fdf9f6;display:flex;align-items:center;justify-content:center;padding-right:1px"><span>0.79</span></div>
<div style="left:677px;top:523px;width:69px;height:25px;background:#eff7fa;display:flex;align-items:center;justify-content:center;padding-right:1px"><span>5.67</span></div>
<div style="left:747px;top:523px;width:69px;height:25px;background:#eff7fa;display:flex;align-items:center;justify-content:center;padding-right:1px"><span>3.68</span></div>
<div style="left:817px;top:523px;width:71px;height:25px;background:#eff7fa;display:flex;align-items:center;justify-content:center;padding-right:1px"><span>1.65</span></div>
<div style="left:889px;top:523px;width:39px;height:25px;background:#f0f0f0;display:flex;align-items:center;justify-content:center;padding-right:1px"><span class="cj"><span style="color:#127a12">平</span></span></div>
<div style="left:929px;top:523px;width:40px;height:25px;background:#f0f0f0;display:flex;align-items:center;justify-content:center;padding-right:1px"><span class="cj"><span style="color:#cc1111">赢</span></span></div>
<div style="left:970px;top:523px;width:60px;height:25px;background:#f0f0f0;display:flex;align-items:center;justify-content:center;padding-right:1px"><span class="cj"><span style="color:#1a1aaa">小</span></span></div>
<div style="left:4px;top:549px;width:80px;height:25px;background:#0088ff;color:#fff;display:flex;align-items:center;justify-content:center;padding-right:1px"><span class="cj">意甲</span></div>
<div style="left:85px;top:549px;width:80px;height:25px;background:#fff;display:flex;align-items:center;justify-content:center;padding-right:1px"><span>24-09-01</span></div>
<div style="left:166px;top:549px;width:78px;height:25px;background:#fff;display:flex;align-items:center;justify-content:center;padding-right:1px"><span class="cj"><span>博洛尼亚</span></span></div>
<div style="left:245px;top:549px;width:95px;height:25px;background:#fff;display:flex;align-items:center;justify-content:center;padding-right:1px"><span><span style="color:#cc1111">1-1</span>(1-1)</span></div>
<div style="left:341px;top:549px;width:41px;height:25px;background:#fff;display:flex;align-items:center;justify-content:center;padding-right:1px"><span>6-3</span></div>
<div style="left:383px;top:549px;width:98px;height:25px;background:#fff;display:flex;align-items:center;justify-content:center;padding-right:1px"><span class="cj"><span style="color:#127a12">恩波利</span></span></div>
<div style="left:482px;top:549px;width:50px;height:25px;background:#fdf9f6;display:flex;align-items:center;justify-content:center;padding-right:1px"><span>0.96</span></div>
<div style="left:533px;top:549px;width:88px;height:25px;background:#fdf9f6;display:flex;align-items:center;justify-content:center;padding-right:1px"><span class="cj">半/一</span></div>
<div style="left:622px;top:549px;width:54px;height:25px;background:#fdf9f6;display:flex;align-items:center;justify-content:center;padding-right:1px"><span>0.93</span></div>
<div style="left:677px;top:549px;width:69px;height:25px;background:#eff7fa;display:flex;align-items:center;justify-content:center;padding-right:1px"><span>1.69</span></div>
<div style="left:747px;top:549px;width:69px;height:25px;background:#eff7fa;display:flex;align-items:center;justify-content:center;padding-right:1px"><span>3.60</span></div>
<div style="left:817px;top:549px;width:71px;height:25px;background:#eff7fa;display:flex;align-items:center;justify-content:center;padding-right:1px"><span>5.42</span></div>
<div style="left:889px;top:549px;width:39px;height:25px;background:#fff;display:flex;align-items:center;justify-content:center;padding-right:1px"><span class="cj"><span style="color:#127a12">平</span></span></div>
<div style="left:929px;top:549px;width:40px;height:25px;background:#fff;display:flex;align-items:center;justify-content:center;padding-right:1px"><span class="cj"><span style="color:#cc1111">赢</span></span></div>
<div style="left:970px;top:549px;width:60px;height:25px;background:#fff;display:flex;align-items:center;justify-content:center;padding-right:1px"><span class="cj"><span style="color:#1a1aaa">小</span></span></div>
<div style="left:4px;top:575px;width:80px;height:25px;background:#0088ff;color:#fff;display:flex;align-items:center;justify-content:center;padding-right:1px"><span class="cj">意甲</span></div>
<div style="left:85px;top:575px;width:80px;height:25px;background:#f0f0f0;display:flex;align-items:center;justify-content:center;padding-right:1px"><span>24-08-26</span></div>
<div style="left:166px;top:575px;width:78px;height:25px;background:#f0f0f0;display:flex;align-items:center;justify-content:center;padding-right:1px"><span class="cj"><span>罗马</span></span></div>
<div style="left:245px;top:575px;width:95px;height:25px;background:#f0f0f0;display:flex;align-items:center;justify-content:center;padding-right:1px"><span><span style="color:#cc1111">1-2</span>(0-1)</span></div>
<div style="left:341px;top:575px;width:41px;height:25px;background:#f0f0f0;display:flex;align-items:center;justify-content:center;padding-right:1px"><span>8-5</span></div>
<div style="left:383px;top:575px;width:98px;height:25px;background:#f0f0f0;display:flex;align-items:center;justify-content:center;padding-right:1px"><span class="cj"><span style="color:#127a12">恩波利</span></span></div>
<div style="left:482px;top:575px;width:50px;height:25px;background:#fdf9f6;display:flex;align-items:center;justify-content:center;padding-right:1px"><span>1.12</span></div>
<div style="left:533px;top:575px;width:88px;height:25px;background:#fdf9f6;display:flex;align-items:center;justify-content:center;padding-right:1px"><span class="cj">一/球半</span></div>
<div style="left:622px;top:575px;width:54px;height:25px;background:#fdf9f6;display:flex;align-items:center;justify-content:center;padding-right:1px"><span>0.78</span></div>
<div style="left:677px;top:575px;width:69px;height:25px;background:#eff7fa;display:flex;align-items:center;justify-content:center;padding-right:1px"><span>1.46</span></div>
<div style="left:747px;top:575px;width:69px;height:25px;background:#eff7fa;display:flex;align-items:center;justify-content:center;padding-right:1px"><span>4.38</span></div>
<div style="left:817px;top:575px;width:71px;height:25px;background:#eff7fa;display:flex;align-items:center;justify-content:center;padding-right:1px"><span>7.01</span></div>
<div style="left:889px;top:575px;width:39px;height:25px;background:#f0f0f0;display:flex;align-items:center;justify-content:center;padding-right:1px"><span class="cj"><span style="color:#cc1111">胜</span></span></div>
<div style="left:929px;top:575px;width:40px;height:25px;background:#f0f0f0;display:flex;align-items:center;justify-content:center;padding-right:1px"><span class="cj"><span style="color:#cc1111">赢</span></span></div>
<div style="left:970px;top:575px;width:60px;height:25px;background:#f0f0f0;display:flex;align-items:center;justify-content:center;padding-right:1px"><span class="cj"><span style="color:#cc1111">大</span></span></div>
<div style="left:4px;top:601px;width:80px;height:25px;background:#0088ff;color:#fff;display:flex;align-items:center;justify-content:center;padding-right:1px"><span class="cj">意甲</span></div>
<div style="left:85px;top:601px;width:80px;height:25px;background:#fff;display:flex;align-items:center;justify-content:center;padding-right:1px"><span>24-08-18</span></div>
<div style="left:166px;top:601px;width:78px;height:25px;background:#fff;display:flex;align-items:center;justify-content:center;padding-right:1px"><span class="cj"><span style="color:#127a12">恩波利</span></span></div>
<div style="left:245px;top:601px;width:95px;height:25px;background:#fff;display:flex;align-items:center;justify-content:center;padding-right:1px"><span><span style="color:#cc1111">0-0</span>(0-0)</span></div>
<div style="left:341px;top:601px;width:41px;height:25px;background:#fff;display:flex;align-items:center;justify-content:center;padding-right:1px"><span>7-3</span></div>
<div style="left:383px;top:601px;width:98px;height:25px;background:#fff;display:flex;align-items:center;justify-content:center;padding-right:1px"><span class="cj"><span>蒙扎</span></span></div>
<div style="left:482px;top:601px;width:50px;height:25px;background:#fdf9f6;display:flex;align-items:center;justify-content:center;padding-right:1px"><span>1.06</span></div>
<div style="left:533px;top:601px;width:88px;height:25px;background:#fdf9f6;display:flex;align-items:center;justify-content:center;padding-right:1px"><span class="cj">平/半</span></div>
<div style="left:622px;top:601px;width:54px;height:25px;background:#fdf9f6;display:flex;align-items:center;justify-content:center;padding-right:1px"><span>0.83</span></div>
<div style="left:677px;top:601px;width:69px;height:25px;background:#eff7fa;display:flex;align-items:center;justify-content:center;padding-right:1px"><span>2.45</span></div>
<div style="left:747px;top:601px;width:69px;height:25px;background:#eff7fa;display:flex;align-items:center;justify-content:center;padding-right:1px"><span>3.14</span></div>
<div style="left:817px;top:601px;width:71px;height:25px;background:#eff7fa;display:flex;align-items:center;justify-content:center;padding-right:1px"><span>3.03</span></div>
<div style="left:889px;top:601px;width:39px;height:25px;background:#fff;display:flex;align-items:center;justify-content:center;padding-right:1px"><span class="cj"><span style="color:#127a12">平</span></span></div>
<div style="left:929px;top:601px;width:40px;height:25px;background:#fff;display:flex;align-items:center;justify-content:center;padding-right:1px"><span class="cj"><span style="color:#1a1aaa">输</span></span></div>
<div style="left:970px;top:601px;width:60px;height:25px;background:#fff;display:flex;align-items:center;justify-content:center;padding-right:1px"><span class="cj"><span style="color:#1a1aaa">小</span></span></div>
<div style="left:4px;top:627px;width:80px;height:25px;background:#3b3bf8;color:#fff;display:flex;align-items:center;justify-content:center;padding-right:1px"><span class="cj">意杯</span></div>
<div style="left:85px;top:627px;width:80px;height:25px;background:#f0f0f0;display:flex;align-items:center;justify-content:center;padding-right:1px"><span>24-08-11</span></div>
<div style="left:166px;top:627px;width:78px;height:25px;background:#f0f0f0;display:flex;align-items:center;justify-content:center;padding-right:1px"><span class="cj"><span style="color:#127a12">恩波利</span></span></div>
<div style="left:245px;top:627px;width:95px;height:25px;background:#f0f0f0;display:flex;align-items:center;justify-content:center;padding-right:1px"><span><span style="color:#cc1111">4-1</span>(1-1)</span></div>
<div style="left:341px;top:627px;width:41px;height:25px;background:#f0f0f0;display:flex;align-items:center;justify-content:center;padding-right:1px"><span>8-2</span></div>
<div style="left:383px;top:627px;width:98px;height:25px;background:#f0f0f0;display:flex;align-items:center;justify-content:center;padding-right:1px"><span class="cj"><span>卡坦萨罗</span></span></div>
<div style="left:482px;top:627px;width:50px;height:25px;background:#fdf9f6;display:flex;align-items:center;justify-content:center;padding-right:1px"><span>1.07</span></div>
<div style="left:533px;top:627px;width:88px;height:25px;background:#fdf9f6;display:flex;align-items:center;justify-content:center;padding-right:1px"><span class="cj">半/一</span></div>
<div style="left:622px;top:627px;width:54px;height:25px;background:#fdf9f6;display:flex;align-items:center;justify-content:center;padding-right:1px"><span>0.81</span></div>
<div style="left:677px;top:627px;width:69px;height:25px;background:#eff7fa;display:flex;align-items:center;justify-content:center;padding-right:1px"><span>1.58</span></div>
<div style="left:747px;top:627px;width:69px;height:25px;background:#eff7fa;display:flex;align-items:center;justify-content:center;padding-right:1px"><span>3.94</span></div>
<div style="left:817px;top:627px;width:71px;height:25px;background:#eff7fa;display:flex;align-items:center;justify-content:center;padding-right:1px"><span>5.39</span></div>
<div style="left:889px;top:627px;width:39px;height:25px;background:#f0f0f0;display:flex;align-items:center;justify-content:center;padding-right:1px"><span class="cj"><span style="color:#cc1111">胜</span></span></div>
<div style="left:929px;top:627px;width:40px;height:25px;background:#f0f0f0;display:flex;align-items:center;justify-content:center;padding-right:1px"><span class="cj"><span style="color:#cc1111">赢</span></span></div>
<div style="left:970px;top:627px;width:60px;height:25px;background:#f0f0f0;display:flex;align-items:center;justify-content:center;padding-right:1px"><span class="cj"><span style="color:#cc1111">大</span></span></div>
<div style="left:4px;top:653px;width:80px;height:25px;background:#00a5a5;color:#fff;display:flex;align-items:center;justify-content:center;padding-right:1px"><span class="cj">球会友谊</span></div>
<div style="left:85px;top:653px;width:80px;height:25px;background:#fff;display:flex;align-items:center;justify-content:center;padding-right:1px"><span>24-08-03</span></div>
<div style="left:166px;top:653px;width:78px;height:25px;background:#fff;display:flex;align-items:center;justify-content:center;padding-right:1px"><span class="cj"><span style="color:#127a12">恩波利</span></span></div>
<div style="left:245px;top:653px;width:95px;height:25px;background:#fff;display:flex;align-items:center;justify-content:center;padding-right:1px"><span><span style="color:#cc1111">0-2</span>(0-1)</span></div>
<div style="left:341px;top:653px;width:41px;height:25px;background:#fff;display:flex;align-items:center;justify-content:center;padding-right:1px"><span>3-5</span></div>
<div style="left:383px;top:653px;width:98px;height:25px;background:#fff;display:flex;align-items:center;justify-content:center;padding-right:1px"><span class="cj"><span>桑普多利亚</span></span></div>
<div style="left:482px;top:653px;width:50px;height:25px;background:#fdf9f6;display:flex;align-items:center;justify-content:center;padding-right:1px"><span>0.95</span></div>
<div style="left:533px;top:653px;width:88px;height:25px;background:#fdf9f6;display:flex;align-items:center;justify-content:center;padding-right:1px"><span class="cj">半球</span></div>
<div style="left:622px;top:653px;width:54px;height:25px;background:#fdf9f6;display:flex;align-items:center;justify-content:center;padding-right:1px"><span>0.87</span></div>
<div style="left:677px;top:653px;width:69px;height:25px;background:#eff7fa;display:flex;align-items:center;justify-content:center;padding-right:1px"><span>1.88</span></div>
<div style="left:747px;top:653px;width:69px;height:25px;background:#eff7fa;display:flex;align-items:center;justify-content:center;padding-right:1px"><span>3.43</span></div>
<div style="left:817px;top:653px;width:71px;height:25px;background:#eff7fa;display:flex;align-items:center;justify-content:center;padding-right:1px"><span>3.67</span></div>
<div style="left:889px;top:653px;width:39px;height:25px;background:#fff;display:flex;align-items:center;justify-content:center;padding-right:1px"><span class="cj"><span style="color:#1a1aaa">负</span></span></div>
<div style="left:929px;top:653px;width:40px;height:25px;background:#fff;display:flex;align-items:center;justify-content:center;padding-right:1px"><span class="cj"><span style="color:#1a1aaa">输</span></span></div>
<div style="left:970px;top:653px;width:60px;height:25px;background:#fff;display:flex;align-items:center;justify-content:center;padding-right:1px"><span class="cj"><span style="color:#1a1aaa">小</span></span></div>
<div style="left:4px;top:679px;width:80px;height:25px;background:#00a5a5;color:#fff;display:flex;align-items:center;justify-content:center;padding-right:1px"><span class="cj">球会友谊</span></div>
<div style="left:85px;top:679px;width:80px;height:25px;background:#f0f0f0;display:flex;align-items:center;justify-content:center;padding-right:1px"><span>24-07-26</span></div>
<div style="left:166px;top:679px;width:78px;height:25px;background:#f0f0f0;display:flex;align-items:center;justify-content:center;padding-right:1px"><span class="cj"><span style="color:#127a12">恩波利</span></span></div>
<div style="left:245px;top:679px;width:95px;height:25px;background:#f0f0f0;display:flex;align-items:center;justify-content:center;padding-right:1px"><span><span style="color:#cc1111">2-0</span>(0-0)</span></div>
<div style="left:341px;top:679px;width:41px;height:25px;background:#f0f0f0;display:flex;align-items:center;justify-content:center;padding-right:1px"><span>4-2</span></div>
<div style="left:383px;top:679px;width:98px;height:25px;background:#f0f0f0;display:flex;align-items:center;justify-content:center;padding-right:1px"><span class="cj"><span>斯佩齐亚</span></span></div>
<div style="left:482px;top:679px;width:50px;height:25px;background:#fdf9f6;display:flex;align-items:center;justify-content:center;padding-right:1px"><span>0.97</span></div>
<div style="left:533px;top:679px;width:88px;height:25px;background:#fdf9f6;display:flex;align-items:center;justify-content:center;padding-right:1px"><span class="cj">半/一</span></div>
<div style="left:622px;top:679px;width:54px;height:25px;background:#fdf9f6;display:flex;align-items:center;justify-content:center;padding-right:1px"><span>0.85</span></div>
<div style="left:677px;top:679px;width:69px;height:25px;background:#eff7fa;display:flex;align-items:center;justify-content:center;padding-right:1px"><span>1.67</span></div>
<div style="left:747px;top:679px;width:69px;height:25px;background:#eff7fa;display:flex;align-items:center;justify-content:center;padding-right:1px"><span>3.65</span></div>
<div style="left:817px;top:679px;width:71px;height:25px;background:#eff7fa;display:flex;align-items:center;justify-content:center;padding-right:1px"><span>4.56</span></div>
<div style="left:889px;top:679px;width:39px;height:25px;background:#f0f0f0;display:flex;align-items:center;justify-content:center;padding-right:1px"><span class="cj"><span style="color:#cc1111">胜</span></span></div>
<div style="left:929px;top:679px;width:40px;height:25px;background:#f0f0f0;display:flex;align-items:center;justify-content:center;padding-right:1px"><span class="cj"><span style="color:#cc1111">赢</span></span></div>
<div style="left:970px;top:679px;width:60px;height:25px;background:#f0f0f0;display:flex;align-items:center;justify-content:center;padding-right:1px"><span class="cj"><span style="color:#1a1aaa">小</span></span></div>
<div style="left:4px;top:705px;width:1026px;height:25px;background:#fff;display:flex;align-items:center;justify-content:center;padding-right:1px"><span style="letter-spacing:0.26px;position:relative;top:1px">近<span style="color:#cc1111">10</span>场,胜5平4负1, 胜率:<span style="color:#cc1111">50%</span> 让胜率:<span style="color:#cc1111">80%</span> 大率:<span style="color:#cc1111">30%</span> 单率:<span style="color:#cc1111">30%</span></span></div>
<div style="left:3px;top:405px;width:1028px;height:1px;background:#c2c2c2"></div>
<div style="left:481px;top:425px;width:550px;height:1px;background:#c2c2c2"></div>
<div style="left:3px;top:444px;width:1028px;height:1px;background:#c2c2c2"></div>
<div style="left:3px;top:470px;width:1028px;height:1px;background:#c2c2c2"></div>
<div style="left:3px;top:496px;width:1028px;height:1px;background:#c2c2c2"></div>
<div style="left:3px;top:522px;width:1028px;height:1px;background:#c2c2c2"></div>
<div style="left:3px;top:548px;width:1028px;height:1px;background:#c2c2c2"></div>
<div style="left:3px;top:574px;width:1028px;height:1px;background:#c2c2c2"></div>
<div style="left:3px;top:600px;width:1028px;height:1px;background:#c2c2c2"></div>
<div style="left:3px;top:626px;width:1028px;height:1px;background:#c2c2c2"></div>
<div style="left:3px;top:652px;width:1028px;height:1px;background:#c2c2c2"></div>
<div style="left:3px;top:678px;width:1028px;height:1px;background:#c2c2c2"></div>
<div style="left:3px;top:704px;width:1028px;height:1px;background:#c2c2c2"></div>
<div style="left:3px;top:730px;width:1028px;height:1px;background:#c2c2c2"></div>
<div style="left:3px;top:405px;width:1px;height:326px;background:#c2c2c2"></div>
<div style="left:84px;top:405px;width:1px;height:300px;background:#c2c2c2"></div>
<div style="left:165px;top:405px;width:1px;height:300px;background:#c2c2c2"></div>
<div style="left:244px;top:405px;width:1px;height:300px;background:#c2c2c2"></div>
<div style="left:340px;top:405px;width:1px;height:300px;background:#c2c2c2"></div>
<div style="left:382px;top:405px;width:1px;height:300px;background:#c2c2c2"></div>
<div style="left:481px;top:405px;width:1px;height:300px;background:#c2c2c2"></div>
<div style="left:532px;top:425px;width:1px;height:280px;background:#c2c2c2"></div>
<div style="left:621px;top:425px;width:1px;height:280px;background:#c2c2c2"></div>
<div style="left:676px;top:405px;width:1px;height:300px;background:#c2c2c2"></div>
<div style="left:746px;top:425px;width:1px;height:280px;background:#c2c2c2"></div>
<div style="left:816px;top:425px;width:1px;height:280px;background:#c2c2c2"></div>
<div style="left:888px;top:405px;width:1px;height:300px;background:#c2c2c2"></div>
<div style="left:928px;top:425px;width:1px;height:280px;background:#c2c2c2"></div>
<div style="left:969px;top:425px;width:1px;height:280px;background:#c2c2c2"></div>
<div style="left:1030px;top:405px;width:1px;height:326px;background:#c2c2c2"></div>
<div style="left:4px;top:444px;width:80px;height:1px;background:#cce7ff"></div>
<div style="left:3px;top:445px;width:1px;height:25px;background:#b2dbff"></div>
<div style="left:84px;top:445px;width:1px;height:25px;background:#d9edff"></div>
<div style="left:4px;top:470px;width:80px;height:1px;background:#8eb0fe"></div>
<div style="left:3px;top:471px;width:1px;height:25px;background:#c4c4fd"></div>
<div style="left:84px;top:471px;width:1px;height:25px;background:#e2e2fe"></div>
<div style="left:4px;top:496px;width:80px;height:1px;background:#8eb0fe"></div>
<div style="left:3px;top:497px;width:1px;height:25px;background:#b2dbff"></div>
<div style="left:84px;top:497px;width:1px;height:25px;background:#d9edff"></div>
<div style="left:4px;top:522px;width:80px;height:1px;background:#80c4ff"></div>
<div style="left:3px;top:523px;width:1px;height:25px;background:#b2dbff"></div>
<div style="left:84px;top:523px;width:1px;height:25px;background:#d9edff"></div>
<div style="left:4px;top:548px;width:80px;height:1px;background:#80c4ff"></div>
<div style="left:3px;top:549px;width:1px;height:25px;background:#b2dbff"></div>
<div style="left:84px;top:549px;width:1px;height:25px;background:#d9edff"></div>
<div style="left:4px;top:574px;width:80px;height:1px;background:#80c4ff"></div>
<div style="left:3px;top:575px;width:1px;height:25px;background:#b2dbff"></div>
<div style="left:84px;top:575px;width:1px;height:25px;background:#d9edff"></div>
<div style="left:4px;top:600px;width:80px;height:1px;background:#80c4ff"></div>
<div style="left:3px;top:601px;width:1px;height:25px;background:#b2dbff"></div>
<div style="left:84px;top:601px;width:1px;height:25px;background:#d9edff"></div>
<div style="left:4px;top:626px;width:80px;height:1px;background:#8eb0fe"></div>
<div style="left:3px;top:627px;width:1px;height:25px;background:#c4c4fd"></div>
<div style="left:84px;top:627px;width:1px;height:25px;background:#e2e2fe"></div>
<div style="left:4px;top:652px;width:80px;height:1px;background:#8eb8e6"></div>
<div style="left:3px;top:653px;width:1px;height:25px;background:#b2e4e4"></div>
<div style="left:84px;top:653px;width:1px;height:25px;background:#d9f2f2"></div>
<div style="left:4px;top:678px;width:80px;height:1px;background:#80d2d2"></div>
<div style="left:3px;top:679px;width:1px;height:25px;background:#b2e4e4"></div>
<div style="left:84px;top:679px;width:1px;height:25px;background:#d9f2f2"></div>
<div style="left:4px;top:704px;width:80px;height:1px;background:#80d2d2"></div>
<div class="sel" style="left:519px;top:406px;width:61px;height:19px;"><span style="font-family:'Liberation Sans', sans-serif;font-size:14px;letter-spacing:-0.5px;">Crow*</span><svg class="chev" style="right:4px" width="10" height="7" viewBox="0 0 10 7"><path d="M0.8 1.2 L5 5.4 L9.2 1.2" fill="none" stroke="#000" stroke-width="2.1"/></svg></div>
<div class="sel" style="left:588px;top:406px;width:50px;height:19px;"><span style="font-family:'Liberation Sans', sans-serif;font-size:14px;top:-0.5px;left:4px;">终指</span><svg class="chev" style="right:4px" width="10" height="7" viewBox="0 0 10 7"><path d="M0.8 1.2 L5 5.4 L9.2 1.2" fill="none" stroke="#000" stroke-width="2.1"/></svg></div>
<div class="sel" style="left:718px;top:406px;width:70px;height:19px;"><span style="font-family:'Liberation Sans', sans-serif;font-size:14px;top:-0.5px;left:4px;">平均值</span><svg class="chev" style="right:4px" width="10" height="7" viewBox="0 0 10 7"><path d="M0.8 1.2 L5 5.4 L9.2 1.2" fill="none" stroke="#000" stroke-width="2.1"/></svg></div>
<div class="sel" style="left:795px;top:406px;width:51px;height:19px;"><span style="font-family:'Liberation Sans', sans-serif;font-size:14px;top:-0.5px;left:4px;">终指</span><svg class="chev" style="right:4px" width="10" height="7" viewBox="0 0 10 7"><path d="M0.8 1.2 L5 5.4 L9.2 1.2" fill="none" stroke="#000" stroke-width="2.1"/></svg></div>
<div class="sel" style="left:934px;top:406px;width:51px;height:19px;"><span style="font-family:'Liberation Sans', sans-serif;font-size:14px;top:-0.5px;left:4px;">全场</span><svg class="chev" style="right:4px" width="10" height="7" viewBox="0 0 10 7"><path d="M0.8 1.2 L5 5.4 L9.2 1.2" fill="none" stroke="#000" stroke-width="2.1"/></svg></div>
</body></html>
